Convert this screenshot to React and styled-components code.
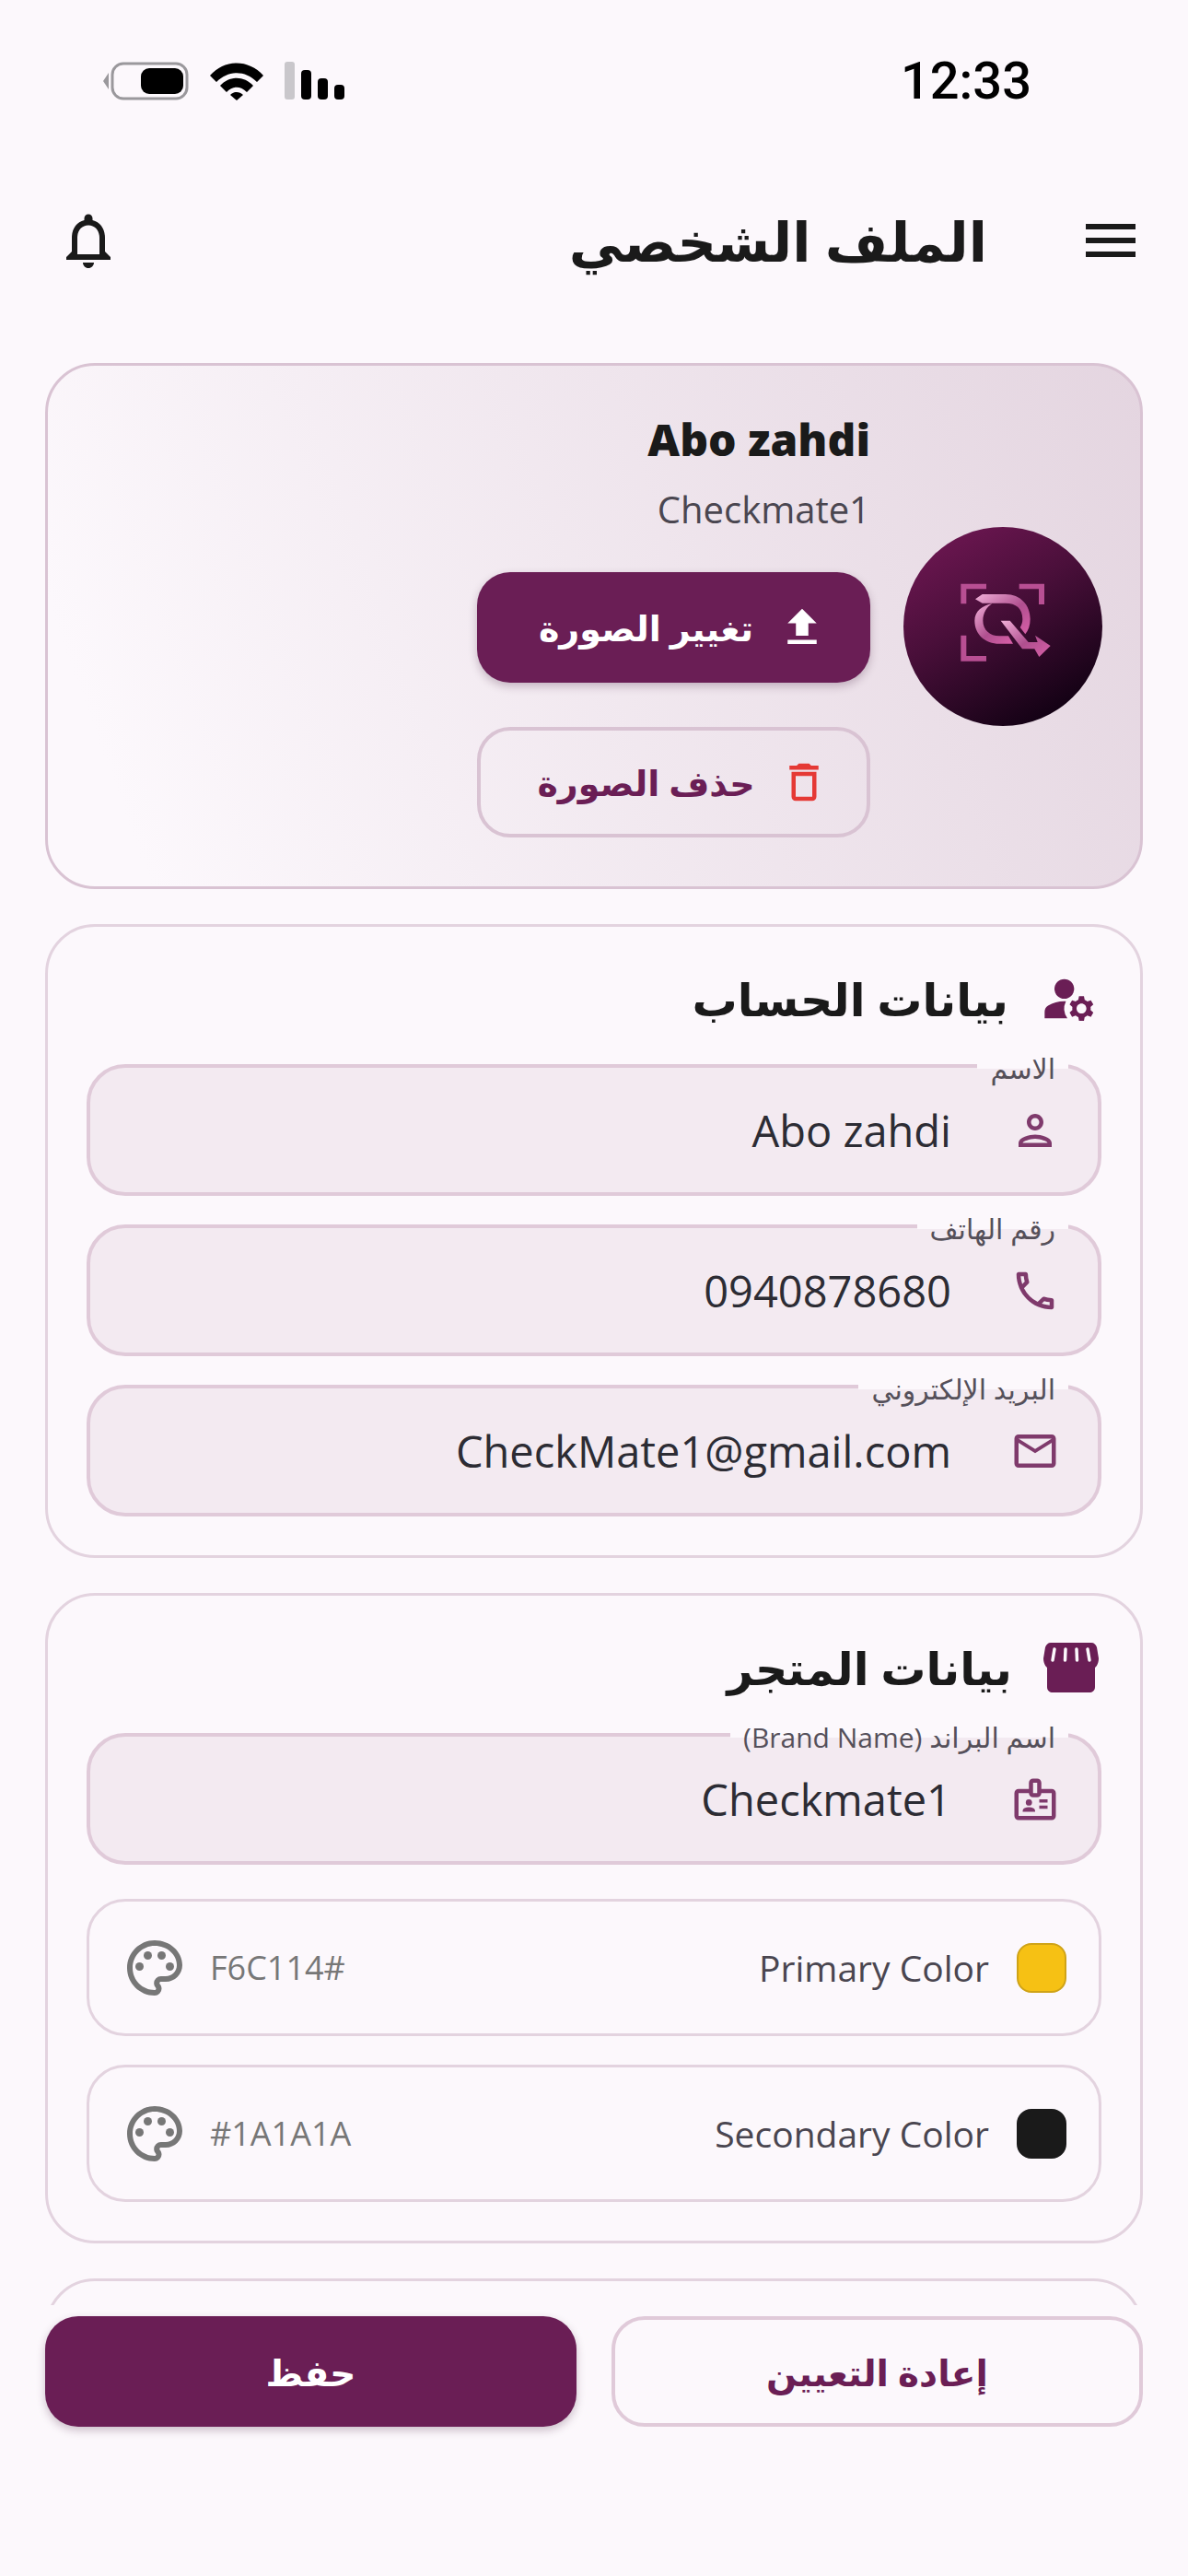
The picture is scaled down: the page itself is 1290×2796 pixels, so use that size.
import React from "react";
import styled, { createGlobalStyle } from "styled-components";
import {
	MdMenu,
	MdOutlineNotifications,
	MdManageAccounts,
	MdOutlinePerson,
	MdOutlinePhone,
	MdOutlineMailOutline,
	MdOutlineBadge,
	MdOutlinePalette,
	MdFileUpload,
	MdOutlineDelete,
} from "react-icons/md";

const primary = "#6a1e55";
const soft = "#7f3a6c";
const page = "#fcf8fc";
const fill = "#f3eaf1";
const line = "#e0cad9";
const font = `"Open Sans", "DejaVu Sans", sans-serif`;

const GlobalStyle = createGlobalStyle`
	html, body {
		margin: 0;
		background: ${page};
	}
	* {
		box-sizing: border-box;
	}
`;

const App = () => {
	return (
		<Screen dir="rtl">
			<GlobalStyle />
			<StatusBar dir="ltr">
				<StatusIcons>
					<svg width="93" height="42" viewBox="0 0 93 42">
						<path d="M6 12 L0 21 L6 30 Z" fill="#9a989c" />
						<rect x="10" y="2" width="81" height="38" rx="12" fill="none" stroke="#9a989c" strokeWidth="3" />
						<rect x="41" y="7" width="46" height="28" rx="9" fill="#000" />
					</svg>
					<svg width="58" height="42" viewBox="0 0 58 42">
						<path d="M0 15 C16 -3 42 -3 58 15 L51 22 C38 9 20 9 7 22 Z" />
						<path d="M11 26 C21 15 37 15 47 26 L40 33 C33 26 25 26 18 33 Z" />
						<path d="M22 36 C26 32 32 32 36 36 L29 42 Z" />
					</svg>
					<svg width="66" height="42" viewBox="0 0 66 42">
						<rect x="0" y="0" width="11" height="41" rx="3" fill="#c9c7cb" />
						<rect x="18" y="9" width="11" height="32" rx="4" />
						<rect x="36" y="18" width="11" height="23" rx="4" />
						<rect x="54" y="25" width="11" height="16" rx="4" />
					</svg>
				</StatusIcons>
				<Clock>12:33</Clock>
			</StatusBar>

			<Header>
				<MdMenu size={72} color="#1a1a1a" />
				<PageTitle>الملف الشخصي</PageTitle>
				<MdOutlineNotifications size={72} color="#1a1a1a" />
			</Header>

			<Scroll>
				<ProfileCard>
					<Avatar>
						<LogoMark />
					</Avatar>
					<ProfileInfo>
						<ProfileName>Abo zahdi</ProfileName>
						<ProfileBrand>Checkmate1</ProfileBrand>
						<ActionButton $solid>
							<MdFileUpload size={54} color="#fff" />
							تغيير الصورة
						</ActionButton>
						<ActionButton>
							<MdOutlineDelete size={54} color="#e53935" />
							حذف الصورة
						</ActionButton>
					</ProfileInfo>
				</ProfileCard>

				<Section>
					<SectionTitle>
						<MdManageAccounts size={64} color={primary} />
						بيانات الحساب
					</SectionTitle>
					<Field label="الاسم" value="Abo zahdi" icon={MdOutlinePerson} />
					<Field label="رقم الهاتف" value="0940878680" icon={MdOutlinePhone} />
					<Field label="البريد الإلكتروني" value="CheckMate1@gmail.com" icon={MdOutlineMailOutline} />
				</Section>

				<Section>
					<SectionTitle>
						<StoreIcon />
						بيانات المتجر
					</SectionTitle>
					<Field label="اسم البراند (Brand Name)" value="Checkmate1" icon={MdOutlineBadge} />
					<ColorList>
						<ColorRow name="Primary Color" hex="F6C114#" color="#f6c114" edge="#cfa317" />
						<ColorRow name="Secondary Color" hex="#1A1A1A" color="#1a1a1a" edge="#1a1a1a" />
					</ColorList>
				</Section>

				<Section />
			</Scroll>

			<Footer>
				<FooterButton>إعادة التعيين</FooterButton>
				<FooterButton $solid>حفظ</FooterButton>
			</Footer>
		</Screen>
	);
};

const Field = ({ label, value, icon: Icon }) => (
	<FieldBox>
		<FieldLabel>{label}</FieldLabel>
		<Icon size={54} color={soft} />
		<FieldValue dir="ltr">{value}</FieldValue>
	</FieldBox>
);

const ColorRow = ({ name, hex, color, edge }) => (
	<ColorBox>
		<Swatch $color={color} $edge={edge} />
		<ColorName dir="ltr">{name}</ColorName>
		<HexValue dir="ltr">{hex}</HexValue>
		<MdOutlinePalette size={72} color="#777" />
	</ColorBox>
);

const StoreIcon = () => (
	<svg width="60" height="54" viewBox="0 0 60 54">
		<path
			d="M8 0 H52 C55 0 57 2 58 5 L60 17 C60 24 56 27 56 27 V48 C56 52 53 54 50 54 H10 C7 54 4 52 4 48 V27 C4 27 0 24 0 17 L2 5 C3 2 5 0 8 0 Z"
			fill={primary}
		/>
		<g stroke={page} strokeWidth="3.5" strokeLinecap="round">
			<path d="M12 7 L10 19" />
			<path d="M24 7 L23.5 19" />
			<path d="M36 7 L36.5 19" />
			<path d="M48 7 L50 19" />
		</g>
	</svg>
);

const LogoMark = () => (
	<svg width="216" height="216" viewBox="63 35 648 648">
		<defs>
			<linearGradient id="logoPink" x1="0" y1="0" x2="1" y2="1">
				<stop offset="0" stopColor="#f0b0d8" />
				<stop offset="0.55" stopColor="#b04f8f" />
				<stop offset="1" stopColor="#d860a8" />
			</linearGradient>
		</defs>
		<g fill="#b84f93">
			<path d="M250 285 V220 H333 V237 H268 V285 Z" />
			<path d="M440 220 H522 V287 H504 V237 H440 Z" />
			<path d="M250 388 H268 V455 H333 V472 H250 Z" />
		</g>
		<g fill="url(#logoPink)">
			<path d="M297 270 L320 254 H395 C445 254 476 290 476 335 C476 355 470 372 460 384 L443 362 C448 355 451 345 451 335 C451 300 430 283 395 283 H320 Z" />
			<path d="M352 285 C320 290 295 310 295 340 C295 385 330 415 375 415 H420 L405 390 H375 C345 390 322 370 322 340 C322 315 335 295 352 285 Z" />
			<path d="M380 340 H410 L470 410 H500 L492 388 L542 422 L505 458 L490 432 H450 Z" />
		</g>
	</svg>
);

const Screen = styled.div`
	width: 1290px;
	height: 2796px;
	display: flex;
	flex-direction: column;
	overflow: hidden;
	background: ${page};
	color: #1a1a1a;
	font-family: ${font};
`;

const StatusBar = styled.div`
	height: 176px;
	padding: 0 170px 0 112px;
	display: flex;
	align-items: center;
	justify-content: space-between;
`;

const StatusIcons = styled.div`
	display: flex;
	align-items: center;
	gap: 23px;
`;

const Clock = styled.span`
	font-family: Roboto, sans-serif;
	font-size: 56px;
	font-weight: 500;
	color: #000;
`;

const Header = styled.header`
	height: 178px;
	padding: 0 48px 8px 60px;
	display: flex;
	align-items: center;
`;

const PageTitle = styled.h1`
	flex: 1;
	margin: 0 98px 0 0;
	font-size: 59px;
	font-weight: 700;
`;

const Scroll = styled.main`
	flex: 1;
	min-height: 0;
	overflow: hidden;
	padding: 40px 49px 0;
	display: flex;
	flex-direction: column;
	gap: 38px;
`;

const ProfileCard = styled.section`
	flex: none;
	height: 571px;
	padding: 0 41px 53px;
	display: flex;
	align-items: center;
	gap: 36px;
	border: 3px solid #d9c3d3;
	border-radius: 54px;
	background: linear-gradient(250deg, #e4d5e0, ${page} 92%);
`;

const Avatar = styled.div`
	flex: none;
	width: 216px;
	height: 216px;
	margin-top: 53px;
	border-radius: 50%;
	background: linear-gradient(150deg, #6b1650 10%, #4a0f3a 42%, #0d0010 92%);
`;

const ProfileInfo = styled.div`
	width: 427px;
	align-self: flex-end;
	display: flex;
	flex-direction: column;
`;

const ProfileName = styled.div`
	font-size: 48px;
	font-weight: 800;
	line-height: 68px;
	font-stretch: 88%;
`;

const ProfileBrand = styled.div`
	margin: 14px 0 40px;
	font-size: 40px;
	line-height: 56px;
	color: #4a4650;
	font-stretch: 88%;
`;

const ActionButton = styled.button`
	height: 120px;
	margin-bottom: ${({ $solid }) => ($solid ? "48px" : "0")};
	padding: 0 0 0 20px;
	display: flex;
	align-items: center;
	justify-content: center;
	gap: 26px;
	border: ${({ $solid }) => ($solid ? "none" : "4px solid #d9c3d3")};
	border-radius: 36px;
	background: ${({ $solid }) => ($solid ? primary : "transparent")};
	box-shadow: ${({ $solid }) => ($solid ? "0 4px 10px rgba(60, 20, 50, 0.25)" : "none")};
	color: ${({ $solid }) => ($solid ? "#fff" : primary)};
	font-family: ${font};
	font-size: 38px;
	font-weight: 700;
`;

const Section = styled.section`
	flex: none;
	padding: 46px 42px 42px;
	display: flex;
	flex-direction: column;
	border: 3px solid #e3d3df;
	border-radius: 54px;
	min-height: 200px;
`;

const SectionTitle = styled.h2`
	height: 64px;
	margin: 0 3px 39px 0;
	display: flex;
	align-items: center;
	gap: 34px;
	font-size: 49px;
	font-weight: 700;
`;

const FieldBox = styled.div`
	position: relative;
	height: 143px;
	margin-bottom: 31px;
	padding: 0 41px;
	display: flex;
	align-items: center;
	gap: 64px;
	border: 4px solid ${line};
	border-radius: 42px;
	background: ${fill};

	&:last-child {
		margin-bottom: 0;
	}
`;

const FieldLabel = styled.label`
	position: absolute;
	top: -14px;
	right: 32px;
	padding: 0 14px;
	font-size: 30px;
	line-height: 30px;
	color: #55505a;
	background: linear-gradient(${page} 50%, ${fill} 50%);
`;

const FieldValue = styled.span`
	font-size: 47px;
	color: #2c2c34;
	font-stretch: 88%;
`;

const ColorList = styled.div`
	margin-top: 6px;
	display: flex;
	flex-direction: column;
	gap: 31px;
`;

const ColorBox = styled.div`
	height: 149px;
	padding: 0 35px;
	display: flex;
	align-items: center;
	border: 3px solid #e3d3df;
	border-radius: 42px;
`;

const Swatch = styled.span`
	width: 54px;
	height: 54px;
	border-radius: 16px;
	background: ${({ $color }) => $color};
	border: 2px solid ${({ $edge }) => $edge};
`;

const ColorName = styled.span`
	flex: 1;
	margin-right: 30px;
	text-align: right;
	font-size: 39px;
	color: #4a4650;
	font-stretch: 88%;
`;

const HexValue = styled.span`
	margin-left: 24px;
	font-size: 36px;
	color: #777;
	font-stretch: 88%;
`;

const Footer = styled.footer`
	flex: none;
	height: 294px;
	padding: 12px 49px 0;
	display: flex;
	align-items: flex-start;
	gap: 38px;
`;

const FooterButton = styled.button`
	flex: 1 1 50%;
	height: 120px;
	border: ${({ $solid }) => ($solid ? "none" : `4px solid ${line}`)};
	border-radius: 36px;
	background: ${({ $solid }) => ($solid ? primary : "transparent")};
	box-shadow: ${({ $solid }) => ($solid ? "0 4px 10px rgba(60, 20, 50, 0.25)" : "none")};
	color: ${({ $solid }) => ($solid ? "#fff" : primary)};
	font-family: ${font};
	font-size: 39px;
	font-weight: 700;
`;

export default App;
